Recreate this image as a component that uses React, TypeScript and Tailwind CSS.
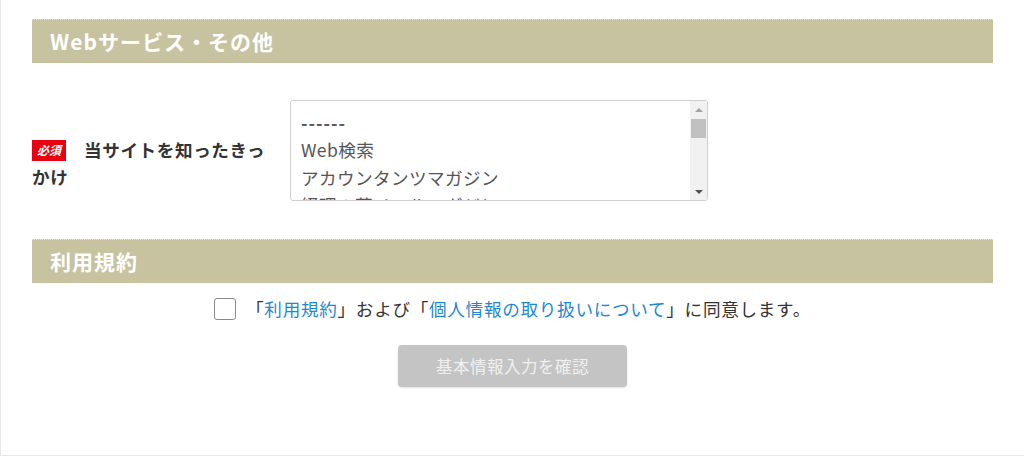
const font = "font-['Meiryo','Noto_Sans_CJK_JP',sans-serif]";

function SectionHeader({ title }: { title: string }) {
  return (
    <div className="h-[44px] bg-[#c7c3a0] border-t border-dotted border-[#e4e1cf] flex items-center pl-[18px]">
      <h2 className="text-[21px] tracking-[1px] font-bold text-white leading-none">{title}</h2>
    </div>
  );
}

function ListBox({ options }: { options: string[] }) {
  return (
    <div className="relative w-[418px] h-[101px] border border-[#cfcfcf] rounded-[3px] bg-white overflow-hidden flex">
      <ul className="flex-1 pl-[10px] pt-[8px] text-[17.6px] leading-[27.3px] text-[#555] tracking-[0.4px]">
        {options.map((o, i) => (
          <li key={o} className={i === 0 ? "whitespace-nowrap font-bold tracking-[1px]" : "whitespace-nowrap"}>{o}</li>
        ))}
      </ul>
      {/* scrollbar */}
      <div className="w-[17px] bg-[#f1f1f1] flex flex-col items-center">
        <div className="h-[17px] flex items-center justify-center">
          <div className="w-0 h-0 border-l-[4px] border-r-[4px] border-b-[4px] border-l-transparent border-r-transparent border-b-[#a3a3a3]" />
        </div>
        <div className="w-[15px] h-[19px] bg-[#c1c1c1] mt-[1px]" />
        <div className="flex-1" />
        <div className="h-[17px] flex items-center justify-center">
          <div className="w-0 h-0 border-l-[4px] border-r-[4px] border-t-[4px] border-l-transparent border-r-transparent border-t-[#505050]" />
        </div>
      </div>
    </div>
  );
}

export default function App() {
  return (
    <div className={`${font} w-[1024px] h-[456px] bg-white border-l border-b border-[#e8e8e8] pl-[31px] pr-[31px] pt-[19px]`}>
      <SectionHeader title="Webサービス・その他" />

      {/* source question */}
      <div className="flex mt-[37px]">
        <div className="w-[258px] shrink-0 pt-[36px] pr-[10px]">
          <p className="text-[17.6px] leading-[27px] font-bold text-[#333] tracking-[0.6px]">
            <span className="inline-flex items-center justify-center align-[2px] w-[34px] h-[21px] bg-[#e60012] text-white text-[12px] font-bold italic leading-none tracking-normal mr-[18px]">
              必須
            </span>
            当サイトを知ったきっかけ
          </p>
        </div>
        <ListBox options={["------", "Web検索", "アカウンタンツマガジン", "経理の薬メールマガジン", "セミナー", "その他"]} />
      </div>

      <div className="mt-[38px]">
        <SectionHeader title="利用規約" />
      </div>

      {/* agreement */}
      <div className="flex items-center justify-center mt-[15px]">
        <div className="w-[22px] h-[22px] border-[1.5px] border-[#8a8a8a] rounded-[3px] bg-white mr-[10px]" />
        <p className="text-[17.6px] leading-[22px] text-[#333] tracking-[0.7px]">
          「<a className="text-[#1e88d4]">利用規約</a>」および「<a className="text-[#1e88d4]">個人情報の取り扱いについて</a>」に同意します。
        </p>
      </div>

      <div className="flex justify-center mt-[25px]">
        <button className="w-[229px] h-[42px] rounded-[4px] bg-[#c4c4c4] text-[#f0f0f0] text-[16.5px] tracking-[0.5px] shadow-[0_1px_2px_rgba(0,0,0,0.12)]">
          基本情報入力を確認
        </button>
      </div>
    </div>
  );
}
